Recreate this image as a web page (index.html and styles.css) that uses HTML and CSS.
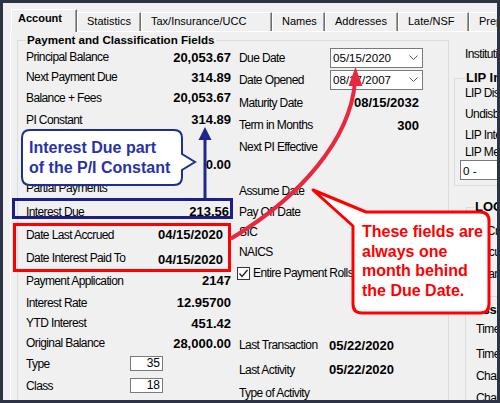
FILE: index.html
```html
<!DOCTYPE html>
<html>
<head>
<meta charset="utf-8">
<title>Account</title>
<link rel="stylesheet" href="styles.css">
</head>
<body>
<div class="window">
  <div class="tabs">
    <div class="tab active">Account</div>
    <div class="tab">Statistics</div>
    <div class="tab">Tax/Insurance/UCC</div>
    <div class="tab">Names</div>
    <div class="tab">Addresses</div>
    <div class="tab">Late/NSF</div>
    <div class="tab">Prepayment</div>
  </div>
  <div class="panel">
    <fieldset class="group main">
      <legend>Payment and Classification Fields</legend>
      <div class="cols">
        <div class="col left">
          <div class="row"><span>Principal Balance</span><b class="val">20,053.67</b></div>
          <div class="row"><span>Next Payment Due</span><b class="val">314.89</b></div>
          <div class="row"><span>Balance + Fees</span><b class="val">20,053.67</b></div>
          <div class="row"><span>PI Constant</span><b class="val">314.89</b></div>
          <div class="row"><span>Escrow</span><b class="val"></b></div>
          <div class="row"><span>Late Charges</span><b class="val">0.00</b></div>
          <div class="row"><span>Partial Payments</span><b class="val"></b></div>
          <div class="row"><span>Interest Due</span><b class="val pad-s">213.56</b></div>
          <div class="row"><span>Date Last Accrued</span><b class="val pad-r">04/15/2020</b></div>
          <div class="row"><span>Date Interest Paid To</span><b class="val pad-r low">04/15/2020</b></div>
          <div class="row"><span>Payment Application</span><b class="val">2147</b></div>
          <div class="row"><span>Interest Rate</span><b class="val">12.95700</b></div>
          <div class="row"><span>YTD Interest</span><b class="val">451.42</b></div>
          <div class="row"><span>Original Balance</span><b class="val">28,000.00</b></div>
          <div class="row short"><span class="lbl-fixed">Type</span><span class="box">35</span></div>
          <div class="row short"><span class="lbl-fixed">Class</span><span class="box">18</span></div>
        </div>
        <div class="col mid">
          <span class="lbl">Due Date</span>
          <div class="combo"><span>05/15/2020</span><svg class="chev" width="9" height="5" viewBox="0 0 9 5"><polyline points="0.5,0.5 4.5,4.5 8.5,0.5" fill="none" stroke="#555" stroke-width="1"/></svg></div>
          <span class="lbl">Date Opened</span>
          <div class="combo"><span>08/17/2007</span><svg class="chev" width="9" height="5" viewBox="0 0 9 5"><polyline points="0.5,0.5 4.5,4.5 8.5,0.5" fill="none" stroke="#555" stroke-width="1"/></svg></div>
          <span class="lbl">Maturity Date</span><b class="val right">08/15/2032</b>
          <span class="lbl">Term in Months</span><b class="val right">300</b>
          <span class="lbl">Next PI Effective</span><span></span>
          <span class="lbl"></span><span></span>
          <span class="lbl">Assume Date</span><span></span>
          <span class="lbl">Pay Off Date</span><span></span>
          <span class="lbl">SIC</span><span></span>
          <span class="lbl">NAICS</span><span></span>
          <label class="check"><span class="cb"><svg width="11" height="11" viewBox="0 0 11 11"><polyline points="1.5,5.5 4,8.5 9.5,2" fill="none" stroke="#222" stroke-width="1.3"/></svg></span>Entire Payment Rolls</label>
          <span class="lbl"></span><span></span>
          <span class="lbl">Last Transaction</span><b class="val">05/22/2020</b>
          <span class="lbl">Last Activity</span><b class="val">05/22/2020</b>
          <span class="lbl">Type of Activity</span><span></span>
        </div>
      </div>
    </fieldset>
    <div class="side">
      <div class="inst">Institution</div>
      <fieldset class="group lip">
        <legend>LIP Information</legend>
        <div class="lip-rows">
          <span>LIP Disbursed</span>
          <span>Undisbursed</span>
          <span>LIP Interest</span>
          <span>LIP Method</span>
        </div>
        <div class="combo wide"><span>0 -</span></div>
      </fieldset>
      <fieldset class="group loc">
        <legend>LOC Info</legend>
        <div class="loc-rows">
          <span>Is Credit</span>
          <span>Accum</span>
          <span>Loan</span>
        </div>
      </fieldset>
      <fieldset class="group assoc">
        <legend>Associated</legend>
        <div class="assoc-rows">
          <span>Times Late</span>
          <span>Times NSF</span>
          <span>Charges</span>
          <span>Charges</span>
        </div>
      </fieldset>
    </div>
  </div>
</div>

<svg class="marks" width="500" height="403" viewBox="0 0 500 403">
  <rect x="13.5" y="199.5" width="218" height="18" fill="none" stroke="#1b1f86" stroke-width="3"/>
  <rect x="14.5" y="224.5" width="215" height="46" fill="none" stroke="#ff0000" stroke-width="3"/>
  <line x1="205" y1="198" x2="205" y2="137" stroke="#1c2a8e" stroke-width="3"/>
  <polygon points="205,127 198.5,140 211.5,140" fill="#1c2a8e"/>
  <path d="M232,238 C300,197 350,140 355,82" fill="none" stroke="#e8283f" stroke-width="4" stroke-linecap="round"/>
  <polygon points="355.5,67 348.5,86 362.5,86" fill="#e8283f"/>
  <path d="M30,130 H174 Q182,130 182,138 V154 L195,162 L182,170 V177 Q182,185 174,185 H30 Q22,185 22,177 V138 Q22,130 30,130 Z" fill="#fff" stroke="#1e2f8f" stroke-width="2"/>
  <path d="M366,212 H480 Q489,212 489,221 V304 Q489,313 480,313 H362 Q353,313 353,304 V226 L313,190 Z" fill="#fff" stroke="#ff0000" stroke-width="3" stroke-linejoin="round"/>
</svg>
<div class="note note-blue">Interest Due part<br>of the P/I Constant</div>
<div class="note note-red">These fields are<br>always one<br>month behind<br>the Due Date.</div>
</body>
</html>
```

FILE: styles.css
```css
* { box-sizing: border-box; }
html, body { margin: 0; padding: 0; }
body {
  width: 500px;
  height: 403px;
  overflow: hidden;
  position: relative;
  background: #2c3345;
  font-family: "Liberation Sans", Arial, sans-serif;
  font-size: 12px;
  letter-spacing: -0.6px;
  color: #000;
}
.window {
  margin: 3px;
  width: 494px;
  height: 397px;
  background: #f0f0f0;
  overflow: hidden;
}

/* tabs */
.tabs {
  display: grid;
  grid-template-columns: 66px 64px 131px 53px 73px 71px 80px;
  align-items: end;
  height: 28px;
  padding-left: 8px;
  font-size: 11px;
  letter-spacing: 0;
}
.tab {
  height: 19px;
  padding-left: 9px;
  line-height: 17px;
  white-space: nowrap;
  overflow: hidden;
  border-top: 1px solid #fff;
  border-left: 1px solid #fff;
  border-right: 1px solid #6e6e6e;
  box-shadow: inset -1px 0 #a0a0a0;
}
.tab.active {
  height: 23px;
  margin-bottom: -1px;
  padding-left: 6px;
  line-height: 16px;
  font-weight: bold;
  background: #f0f0f0;
  position: relative;
}

/* panel */
.panel {
  display: flex;
  align-items: flex-start;
  gap: 5px;
  height: 369px;
  margin-left: 7px;
  padding: 1px 0 0 6px;
  border-top: 1px solid #fff;
  border-left: 1px solid #fff;
}
.group {
  margin: 0;
  border: 1px solid #dcdcdc;
  min-width: 0;
}
.group legend {
  padding: 0 1px;
  font: bold 13px "Liberation Sans", Arial, sans-serif;
  letter-spacing: 0;
  line-height: 14px;
}
.main {
  flex: none;
  width: 432px;
  height: 400px;
  padding: 0 0 0 8px;
}
.main legend {
  font-size: 11.6px;
}
.cols {
  display: flex;
  gap: 8px;
}
.col.left {
  width: 205px;
  display: grid;
  grid-template-rows: 20px 20px 21px 23px 22px 23px 24px 23px 23px 23px 23px 21px 20px 20px 21px 23px;
}
.row {
  display: flex;
  align-items: center;
  justify-content: space-between;
  white-space: nowrap;
}
.row.short { justify-content: flex-start; }
.lbl-fixed { width: 104px; }
.val {
  font: bold 13px "Liberation Sans", Arial, sans-serif;
  letter-spacing: 0;
  white-space: nowrap;
}
.pad-r { padding-right: 8px; }
.pad-s { padding-right: 2px; }
.low { align-self: flex-end; padding-bottom: 2px; }
.box {
  width: 33px;
  height: 15px;
  background: #fff;
  border: 1px solid #7a7a7a;
  text-align: right;
  padding-right: 2px;
  font: 12px/13px "Liberation Sans", Arial, sans-serif;
  letter-spacing: 0;
}

.col.mid {
  width: 186px;
  display: grid;
  grid-template-columns: 90px 96px;
  grid-template-rows: 21px 23px 23px 22px 22px 22px 22px 20px 20px 20px 22px 49px 24px 25px 22px;
  align-items: center;
  white-space: nowrap;
}
.val.right { text-align: right; padding-right: 6px; }
.combo {
  display: flex;
  align-items: center;
  justify-content: space-between;
  width: 93px;
  height: 20px;
  margin-left: 1px;
  padding: 0 4px 0 2px;
  background: #fff;
  border: 1px solid #7a7a7a;
  font: 11.6px "Liberation Sans", Arial, sans-serif;
  letter-spacing: 0;
}
.chev { display: block; }
.check {
  grid-column: 1 / -1;
  display: flex;
  align-items: center;
  gap: 3px;
  margin-left: -2px;
}
.cb {
  width: 13px;
  height: 13px;
  background: #fff;
  border: 1px solid #333;
  display: flex;
  align-items: center;
  justify-content: center;
}
.cb svg { display: block; }

/* right side */
.side {
  flex: none;
  width: 70px;
  padding-top: 10px;
  white-space: nowrap;
}
.inst {
  height: 22px;
  line-height: 22px;
  padding-left: 11px;
}
.lip {
  margin-top: 6px;
  padding: 0 0 5px 10px;
}
.lip-rows {
  display: grid;
  grid-template-rows: 16px 25px 18px 15px;
  align-items: center;
}
.combo.wide {
  width: 60px;
  margin: 1px 0 0 -5px;
}
.loc {
  margin: 14px 0 0 12px;
  padding: 6px 0 10px 9px;
}
.loc legend { margin-left: -2px; }
.loc-rows {
  display: grid;
  grid-template-rows: 22px 20px 24px;
  align-items: center;
}
.assoc {
  margin: 6px 0 0 11px;
  padding: 0 0 0 10px;
  height: 120px;
}
.assoc legend { margin-left: -4px; }
.assoc-rows {
  display: grid;
  grid-template-rows: 24px 25px 20px 23px;
  align-items: center;
}

/* annotation overlays */
.marks {
  position: absolute;
  left: 0;
  top: 0;
}
.note {
  position: absolute;
  font: bold 16px "Liberation Sans", Arial, sans-serif;
  letter-spacing: 0;
  white-space: nowrap;
}
.note-blue {
  left: 22px;
  top: 130px;
  padding: 8px 0 0 7px;
  line-height: 20px;
  color: #2733a8;
}
.note-red {
  left: 353px;
  top: 212px;
  padding: 10px 0 0 9px;
  line-height: 19.5px;
  color: #ff0000;
}
```
